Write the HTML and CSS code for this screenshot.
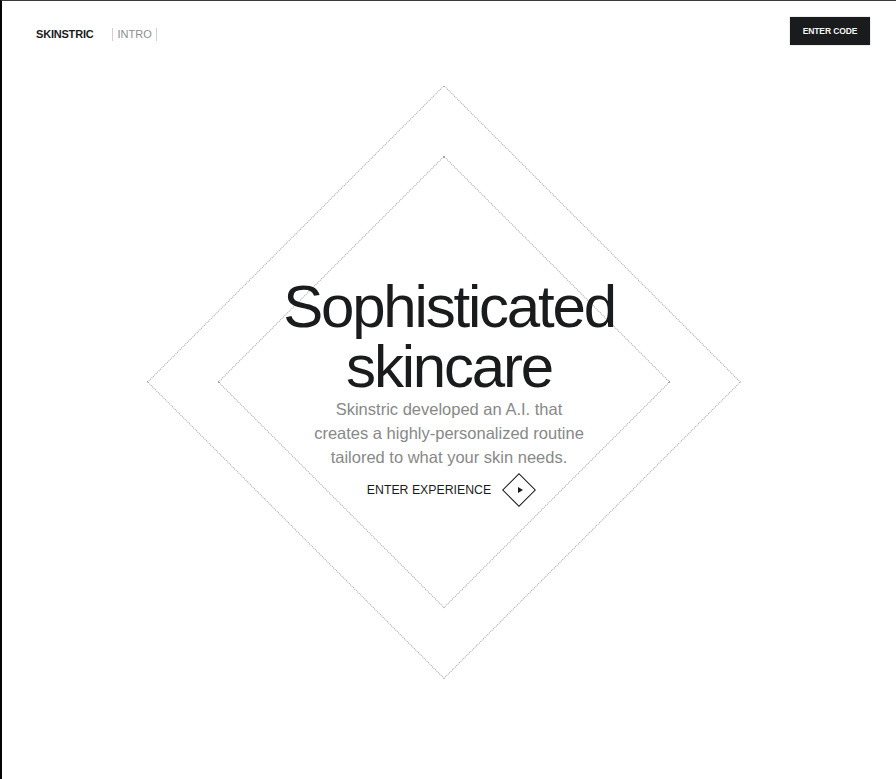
FILE: index.html
```html
<!DOCTYPE html>
<html lang="en">
<head>
<meta charset="utf-8">
<title>Skinstric</title>
<link rel="stylesheet" href="styles.css">
</head>
<body>
  <header class="topbar">
    <nav class="brand-nav">
      <span class="brand">SKINSTRIC</span>
      <span class="crumb">INTRO</span>
    </nav>
    <button class="code-btn" type="button">ENTER CODE</button>
  </header>
  <main class="hero">
    <div class="diamond diamond-outer"></div>
    <div class="diamond diamond-inner"></div>
    <section class="hero-copy">
      <h1 class="title"><span class="title-line">Sophisticated</span><span class="title-line">skincare</span></h1>
      <p class="lead">Skinstric developed an A.I. that creates a highly-personalized routine tailored to what your skin needs.</p>
      <a class="cta" href="#">
        <span class="cta-label">ENTER EXPERIENCE</span>
        <span class="cta-icon"><span class="cta-square"></span><span class="cta-play"></span></span>
      </a>
    </section>
  </main>
</body>
</html>
```
FILE: styles.css
```css
html, body {
  margin: 0;
  padding: 0;
}

body {
  box-sizing: border-box;
  height: 779px;
  overflow: hidden;
  background: #ffffff;
  border-top: 1px solid #3a3a3a;
  border-left: 2px solid #050505;
  font-family: "Liberation Sans", Arial, sans-serif;
  color: #1a1b1c;
}

.topbar {
  display: flex;
  justify-content: space-between;
  align-items: flex-start;
  padding: 16px 26px 0 34px;
  height: 28px;
}

.brand-nav {
  display: flex;
  align-items: center;
  margin-top: 10px;
  font-size: 11px;
  line-height: 14px;
}

.brand {
  font-weight: 600;
  color: #1a1b1c;
  letter-spacing: -0.2px;
}

.crumb {
  margin-left: 19px;
  padding: 0 4px 0 4px;
  color: #8e8e8e;
  border-left: 1px solid #cfcfcf;
  border-right: 1px solid #cfcfcf;
  line-height: 13px;
}

.code-btn {
  width: 80px;
  height: 28px;
  padding: 0;
  border: none;
  border-radius: 0;
  background: #1a1b1c;
  color: #f5f5f5;
  font-family: "Liberation Sans", Arial, sans-serif;
  font-size: 8.5px;
  font-weight: 600;
  letter-spacing: -0.1px;
  box-shadow: 0 0 1px rgba(0, 0, 0, 0.4);
}

.hero {
  display: grid;
  grid-template-columns: 1fr;
  grid-template-rows: 1fr;
  place-items: center;
  height: 674px;
}

.diamond {
  grid-area: 1 / 1;
  box-sizing: border-box;
  border: 1px dotted #a0a4ab;
  transform: translateX(-5px) rotate(45deg);
}

.diamond-outer {
  width: 420px;
  height: 420px;
}

.diamond-inner {
  width: 320px;
  height: 320px;
}

.hero-copy {
  grid-area: 1 / 1;
  display: flex;
  flex-direction: column;
  align-items: center;
  text-align: center;
  margin-top: 20px;
  position: relative;
}

.title {
  display: flex;
  flex-direction: column;
  align-items: center;
  margin: 0;
  font-size: 60px;
  font-weight: 400;
  letter-spacing: -2.2px;
  color: #1a1b1c;
}

.title-line {
  display: block;
  height: 60px;
  line-height: 60px;
}

.lead {
  margin: 0;
  max-width: 278px;
  font-size: 16.5px;
  line-height: 24px;
  color: #888888;
}

.cta {
  display: flex;
  align-items: center;
  gap: 11px;
  margin-top: 4px;
  margin-left: 5px;
  text-decoration: none;
  color: #1a1b1c;
}

.cta-label {
  font-size: 12.3px;
  line-height: 14px;
}

.cta-icon {
  display: grid;
  place-items: center;
  width: 34px;
  height: 34px;
}

.cta-square {
  grid-area: 1 / 1;
  box-sizing: border-box;
  width: 24px;
  height: 24px;
  border: 1px solid #1a1b1c;
  transform: rotate(45deg);
}

.cta-play {
  grid-area: 1 / 1;
  width: 0;
  height: 0;
  margin-left: 2px;
  border-left: 5px solid #1a1b1c;
  border-top: 3px solid transparent;
  border-bottom: 3px solid transparent;
}
```
